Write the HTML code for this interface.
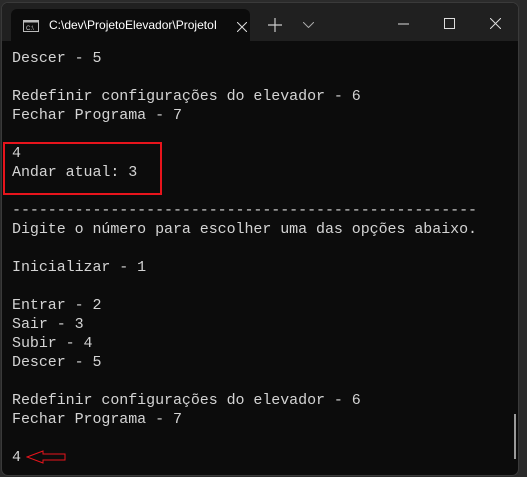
<!DOCTYPE html>
<html><head><style>
body{margin:0;width:527px;height:477px;background:#2b2b2b;overflow:hidden;font-family:"Liberation Sans",sans-serif}
.win{position:absolute;left:1px;top:2px;width:516px;height:472px;background:#0c0c0c;border:1px solid #3a3a3a;border-radius:7px;overflow:hidden}
.bar{position:absolute;left:0;top:0;width:516px;height:38px;background:#202020}
.tab{position:absolute;left:9px;top:6px;width:239px;height:33px;background:#0c0c0c;border-radius:6px 6px 0 0}
.tab span{position:absolute;left:38px;top:9px;color:#fff;font-size:12px;white-space:nowrap}
pre{position:absolute;left:10px;top:46px;margin:0;font-family:"Liberation Mono",monospace;font-size:15px;line-height:19px;color:#d4d4d4;letter-spacing:-0.06px}
.box{position:absolute;left:1px;top:139px;width:155px;height:49px;border:2px solid #e8141c}
.sb{position:absolute;left:512px;top:411px;width:2px;height:45px;background:#9a9a9a}
</style></head><body>
<div class="win">
<div class="bar">
<div class="tab">
<svg style="position:absolute;left:12px;top:11px" width="16" height="12"><rect x="0.5" y="0.5" width="15" height="11" fill="none" stroke="#bbb"/><rect x="0.5" y="0.5" width="15" height="2" fill="#bbb"/><text x="3" y="10" font-size="6" fill="#ccc" font-family="Liberation Sans">C:\</text></svg>
<span>C:\dev\ProjetoElevador\ProjetoI</span>
<svg style="position:absolute;left:226px;top:13px" width="10" height="10"><path d="M0 0L10 10M10 0L0 10" stroke="#ddd" stroke-width="1"/></svg>
</div>
<svg style="position:absolute;left:266px;top:15px" width="14" height="14"><path d="M7 0V14M0 7H14" stroke="#ccc" stroke-width="1.2"/></svg>
<svg style="position:absolute;left:301px;top:19px" width="11" height="6"><path d="M0 0L5.5 5.5L11 0" stroke="#aaa" fill="none"/></svg>
<svg style="position:absolute;left:396px;top:20px" width="11" height="2"><path d="M0 1H11" stroke="#ddd"/></svg>
<svg style="position:absolute;left:442px;top:15px" width="11" height="11"><rect x="0.5" y="0.5" width="10" height="10" fill="none" stroke="#ddd"/></svg>
<svg style="position:absolute;left:488px;top:15px" width="11" height="11"><path d="M0 0L11 11M11 0L0 11" stroke="#ddd"/></svg>
</div>
<pre>Descer - 5

Redefinir configurações do elevador - 6
Fechar Programa - 7

4
Andar atual: 3

----------------------------------------------------
Digite o número para escolher uma das opções abaixo.

Inicializar - 1

Entrar - 2
Sair - 3
Subir - 4
Descer - 5

Redefinir configurações do elevador - 6
Fechar Programa - 7

4</pre>
<div class="box"></div>
<div class="sb"></div>
<svg style="position:absolute;left:24px;top:446px" width="42" height="16"><path d="M1 8L17 2V5H39V11H17V14Z" fill="none" stroke="#e8141c" stroke-width="1"/></svg>
</div>
</body></html>
